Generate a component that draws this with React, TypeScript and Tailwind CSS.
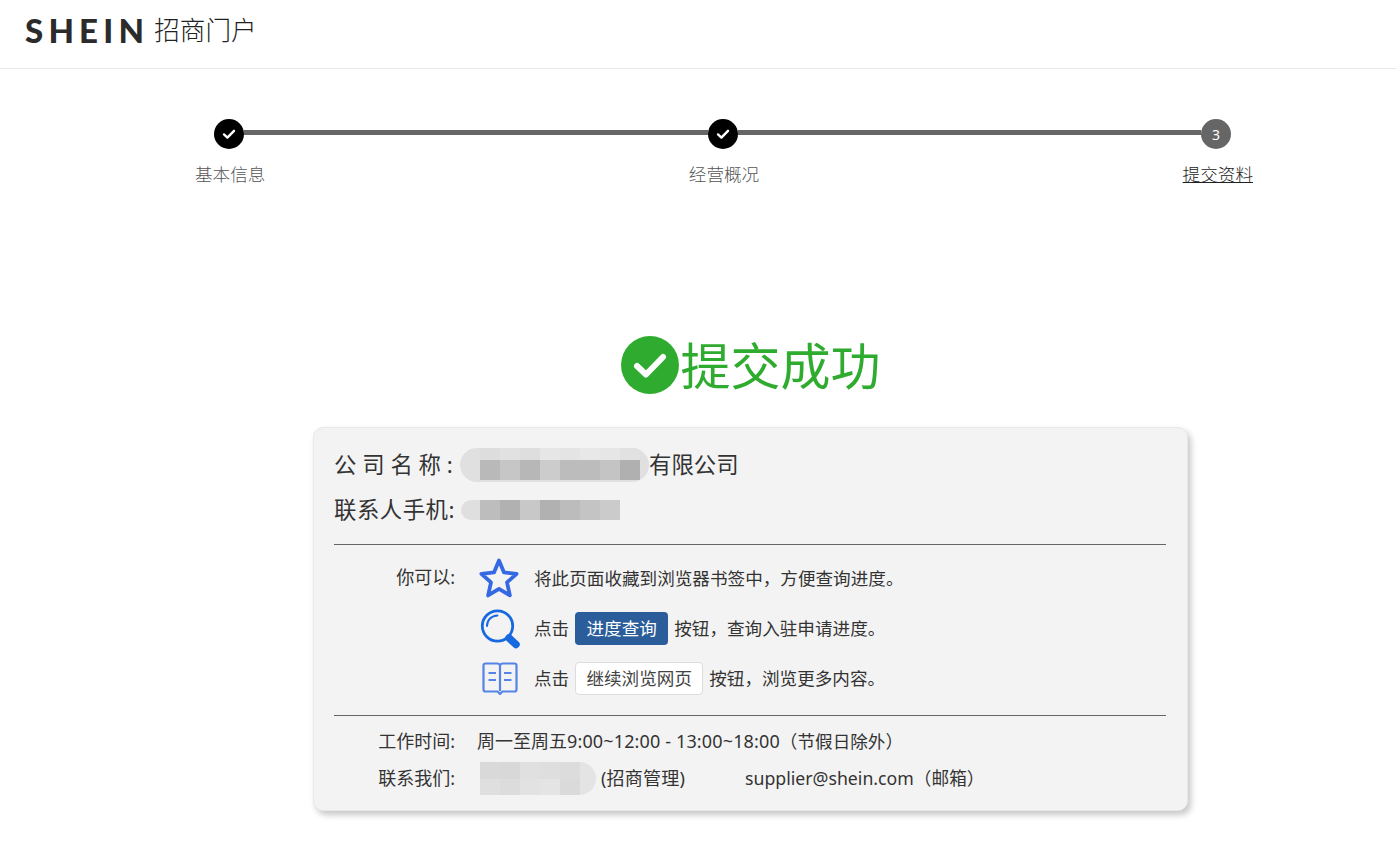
import React from "react";

function Check({ size = 14 }: { size?: number }) {
  return (
    <svg width={size} height={size} viewBox="0 0 14 14" fill="none">
      <path d="M2 7.4 5.4 10.6 12 3.8" stroke="#fff" strokeWidth="2.4" strokeLinecap="round" strokeLinejoin="round" />
    </svg>
  );
}

function Cells({ colors, h = "h-5" }: { colors: string[]; h?: string }) {
  return (
    <div className="flex">
      {colors.map((c, i) => (
        <div key={i} className={`w-5 ${h}`} style={{ background: c }} />
      ))}
    </div>
  );
}

function StepDot({ done, n }: { done?: boolean; n?: number }) {
  return (
    <div className={`flex h-[30px] w-[30px] shrink-0 items-center justify-center rounded-full text-[14px] text-white ${done ? "bg-black" : "bg-[#666666]"}`}>
      {done ? <Check /> : n}
    </div>
  );
}

function Star() {
  return (
    <svg width="42" height="41" viewBox="0 0 42 41" fill="none" className="shrink-0">
      <path
        d="M21 2.4 26 14.4 38.6 15.8 29 24.4 31.9 37.4 21 30.8 10.1 37.4 13 24.4 3.4 15.8 16 14.4Z"
        stroke="#3569e4"
        strokeWidth="3.8"
        strokeLinejoin="round"
      />
    </svg>
  );
}

function Magnifier() {
  return (
    <svg width="42" height="42" viewBox="0 0 42 42" fill="none" className="mt-[1px] shrink-0">
      <circle cx="18.5" cy="18" r="15.2" stroke="#1769e0" strokeWidth="2.8" />
      <path d="M8 18C8 12 12.4 7.6 18.5 7.4" stroke="#1769e0" strokeWidth="2" strokeLinecap="round" />
      <path d="M30 30 37 36.5" stroke="#1769e0" strokeWidth="7.5" strokeLinecap="round" />
    </svg>
  );
}

function Book() {
  return (
    <svg width="36" height="34" viewBox="0 0 36 34" fill="none" className="mt-[1px] shrink-0">
      <path
        d="M3.5 1.5H15C16.6 1.5 18 2.5 18 4C18 2.5 19.4 1.5 21 1.5H32.5C33.6 1.5 34.5 2.4 34.5 3.5V27.5C34.5 28.6 33.6 29.5 32.5 29.5H20.4L18 32 15.6 29.5H3.5C2.4 29.5 1.5 28.6 1.5 27.5V3.5C1.5 2.4 2.4 1.5 3.5 1.5Z"
        stroke="#5484e8"
        strokeWidth="2.2"
        strokeLinejoin="round"
      />
      <path d="M18 4V29M6.5 11H14M6.5 18H14M22 11H29.5M22 18H29.5" stroke="#5484e8" strokeWidth="2.2" />
    </svg>
  );
}

export default function App() {
  return (
    <div className="min-h-[841px] bg-white text-[17.6px] text-[#333333] font-['Noto_Sans','Noto_Sans_CJK_SC',sans-serif]">
      <header className="flex h-[69px] items-center border-b border-[#e8e8e8] pb-[7px] pl-[25px]">
        <span className="font-['Lato',sans-serif] text-[33px] leading-none font-black tracking-[5.2px] text-[#2b2b2b]">SHEIN</span>
        <span className="ml-[5px] text-[25.6px] leading-none font-light text-[#222222]">招商门户</span>
      </header>

      <section className="pt-[50px]">
        <div className="ml-[214px] flex w-[1017px] items-center">
          <StepDot done />
          <div className="mb-[3px] h-[5px] flex-1 bg-[#666666]" />
          <StepDot done />
          <div className="mb-[3px] h-[5px] flex-1 bg-[#666666]" />
          <StepDot n={3} />
        </div>
        <div className="mt-[11px] ml-[195px] flex w-[1058px] justify-between font-light text-[#555555]">
          <span className="leading-[28px]">基本信息</span>
          <span className="leading-[28px]">经营概况</span>
          <span className="leading-[28px] text-[#222222] underline">提交资料</span>
        </div>
      </section>

      <div className="mt-[148px] ml-[313px] w-[875px]">
        <div className="flex items-center justify-center">
          <svg width="58" height="58" viewBox="0 0 58 58" className="mr-[2px] mb-[2px] shrink-0">
            <circle cx="29" cy="29" r="29" fill="#2fac2f" />
            <path d="M16 30 25 38.5 42 21" stroke="#fff" strokeWidth="6" fill="none" strokeLinecap="round" strokeLinejoin="round" />
          </svg>
          <span className="text-[50px] leading-[60px] text-[#2fac2f]">提交成功</span>
        </div>

        <div className="mt-[31px] h-[384px] rounded-[10px] border border-[#e8e8e8] bg-[#f3f3f3] pt-[14px] pr-[21px] pl-[20px] shadow-[3px_4px_6px_rgba(0,0,0,0.22)]">
          <div className="flex h-[45px] items-center text-[22.4px]">
            <span className="w-[121px] shrink-0 tracking-[5.8px] whitespace-nowrap">公司名称:</span>
            <div className="relative ml-[5px] h-[34px] w-[189px] shrink-0 overflow-hidden rounded-full bg-[#e0e0e0]">
              <div className="absolute top-0 left-[20px]">
                <Cells h="h-3" colors={["#dddddd", "#e1e1e1", "#dedede", "#e6e6e6", "#e4e4e4", "#e8e8e8", "#e6e6e6", "#e1e1e1"]} />
              </div>
              <div className="absolute top-[12px] left-[20px]">
                <Cells colors={["#b9b9b9", "#c6c6c6", "#b7b7b7", "#cccccc", "#bcbcbc", "#bcbcbc", "#c4c4c4", "#b0b0b0"]} />
              </div>
            </div>
            <span>有限公司</span>
          </div>
          <div className="flex h-[45px] items-center text-[22.4px]">
            <span className="w-[121px] shrink-0 tracking-[0.5px] whitespace-nowrap">联系人手机:</span>
            <div className="ml-[6px] flex">
              <div className="h-5 w-[19px] rounded-l-full bg-[#dfdfdf]" />
              <Cells colors={["#bdbdbd", "#b1b1b1", "#c8c8c8", "#b1b1b1", "#bcbcbc", "#c4c4c4", "#cbcbcb"]} />
            </div>
          </div>

          <div className="mt-[12px] h-px bg-[#666666]" />

          <div className="mt-[8px] flex h-[50px] items-center">
            <span className="w-[121px] shrink-0 pb-[2px] text-right text-[18px]">你可以:</span>
            <div className="ml-[23px] flex w-[42px] justify-center">
              <Star />
            </div>
            <span className="ml-[14px]">将此页面收藏到浏览器书签中，方便查询进度。</span>
          </div>
          <div className="flex h-[50px] items-center">
            <div className="ml-[145px] flex w-[42px] justify-center">
              <Magnifier />
            </div>
            <span className="ml-[13px]">点击</span>
            <span className="mx-[6px] flex h-[33px] w-[93px] items-center justify-center rounded-[4px] bg-[#2a5d99] text-white">进度查询</span>
            <span>按钮，查询入驻申请进度。</span>
          </div>
          <div className="flex h-[50px] items-center">
            <div className="ml-[145px] flex w-[42px] justify-center">
              <Book />
            </div>
            <span className="ml-[13px]">点击</span>
            <span className="mx-[6px] flex h-[33px] w-[128px] items-center justify-center rounded-[4px] border border-[#dddddd] bg-white text-[#444444]">继续浏览网页</span>
            <span>按钮，浏览更多内容。</span>
          </div>

          <div className="mt-[12px] h-px bg-[#666666]" />

          <div className="mt-[7px] flex h-[37px] items-center text-[18px]">
            <span className="w-[121px] shrink-0 text-right">工作时间:</span>
            <span className="ml-[22px]">
              周一至周五<span className="tracking-[0.14px]">9:00~12:00 - 13:00~18:00</span><span className="text-[17.6px]">（节假日除外）</span>
            </span>
          </div>
          <div className="flex h-[37px] items-center text-[18px]">
            <span className="w-[121px] shrink-0 text-right">联系我们:</span>
            <div className="relative ml-[25px] h-[33px] w-[116px] shrink-0 overflow-hidden rounded-r-full bg-[#e4e4e4]">
              <Cells h="h-[17px]" colors={["#d9d9d9", "#d8d8d8", "#e0e0e0", "#dedede", "#dcdcdc"]} />
              <Cells h="h-4" colors={["#dfdfdf", "#dcdcdc", "#e2e2e2", "#e4e4e4", "#dadada"]} />
            </div>
            <span className="ml-[5px] tracking-[0.2px]">(招商管理)</span>
            <span className="ml-[60px] text-[17.7px]">supplier@shein.com（邮箱）</span>
          </div>
        </div>
      </div>
    </div>
  );
}
